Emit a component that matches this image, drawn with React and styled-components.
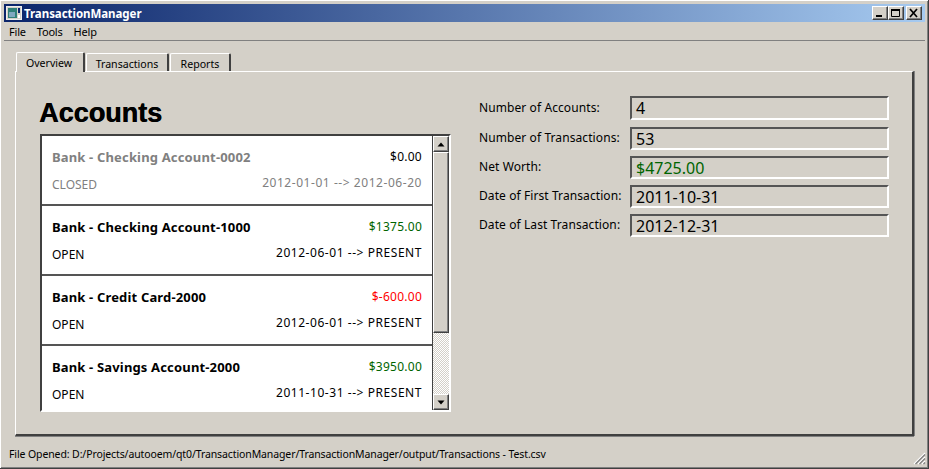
import React from "react";
import styled, { createGlobalStyle } from "styled-components";

const Global = createGlobalStyle`
  html, body { margin: 0; padding: 0; background: #d4d0c8; }
  * { box-sizing: border-box; }
`;
const FONT = `"Noto Sans", "DejaVu Sans", sans-serif`;

const Win = styled.div`
  position: relative;
  width: 929px; height: 469px; overflow: hidden;
  background: #d4d0c8; font-family: ${FONT}; font-size: 11px; color: #000;
  display: flex; flex-direction: column;
  padding: 4px 3px 3px 4px;
  border-right: 1px solid #404040; border-bottom: 1px solid #404040;
  box-shadow: inset 1px 1px 0 #fff, inset -1px -1px 0 #808080;
`;
const TitleBar = styled.div`
  height: 18px; flex: none; display: flex; align-items: center; padding: 0 3px 0 2px;
  background: linear-gradient(90deg, #0a246a, #a6caf0);
  color: #fff; font-weight: 700; font-size: 11.5px;
`;
const AppIcon = styled.svg` width: 16px; height: 14px; margin-right: 2px; flex: none; `;
const TitleText = styled.span` flex: 1; letter-spacing: -0.05px; `;
const WinBtn = styled.div`
  width: 16px; height: 14px; margin-left: ${p => p.$ml || 0}px; background: #d4d0c8;
  border: 1px solid; border-color: #fff #404040 #404040 #fff;
  box-shadow: inset -1px -1px 0 #808080;
  display: flex; align-items: center; justify-content: center;
`;
const MenuBar = styled.div`
  height: 19px; flex: none; display: flex; align-items: center; gap: 11px; padding: 1px 0 0 5px;
  border-bottom: 1px solid #808080; font-size: 11px; letter-spacing: -0.2px;
`;
const Body = styled.div`
  flex: none; padding: 11px 0 0 11px; display: flex; flex-direction: column;
`;
const TabRow = styled.div` display: flex; align-items: flex-end; height: 19px; flex: none; position: relative; z-index: 1; padding-left: 1px; `;
const Tab = styled.div`
  height: ${p => p.$active ? 20 : 18}px;
  width: ${p => p.$w}px; margin-right: 1px;
  display: flex; align-items: center; justify-content: center;
  padding: ${p => p.$active ? "0 2px 0 0" : "3px 0 0 0"};
  background: #d4d0c8; font-size: 10.6px;
  border-top: 1px solid #fff; border-left: 1px solid #fff;
  border-right: 2px solid #404040;
  border-radius: 2px 2px 0 0;
  margin-bottom: ${p => p.$active ? -1 : 0}px;
`;
const Pane = styled.div`
  width: 899px; height: 365px; flex: none;
  border-top: 1px solid #fff; border-left: 1px solid #fff;
  border-right: 2px solid #404040; border-bottom: 2px solid #404040;
  box-shadow: 0 1px 0 #808080, 1px 0 0 #808080;
  padding: 22px 24px 0 24px;
  display: flex;
`;
const LeftCol = styled.div` width: 412px; flex: none; display: flex; flex-direction: column; `;
const Heading = styled.h1`
  margin: 0 0 0 -1px; height: 40px; font-size: 27px; line-height: 38px; font-weight: 700;
  font-family: "Liberation Sans", sans-serif; text-shadow: 0.6px 0 0 #000;
`;
const ListFrame = styled.div`
  width: 411px; height: 278px; display: flex; background: #fff;
  border: 2px solid; border-color: #404040 #fff #fff #404040;
  box-shadow: inset -1px -1px 0 #d4d0c8;
`;
const Items = styled.div` width: 390px; flex: none; overflow: hidden; height: 100%; `;
const Item = styled.div`
  height: 70px; border-bottom: 2px solid #555; background: #fff;
  padding: 0 10px; display: grid; grid-template-columns: 1fr auto; grid-template-rows: 37px 27px;
  color: ${p => p.$muted ? "#808080" : "#000"}; font-size: 12px;
  align-items: center;
`;
const ItemName = styled.div` font-weight: 700; font-size: 13px; padding-top: 5px; letter-spacing: 0.16px; `;
const Amount = styled.div` justify-self: end; padding-top: 3px; letter-spacing: 0.25px; color: ${p => p.$c || "#000"}; `;
const ItemStatus = styled.div` padding-bottom: 5px; `;
const ItemDates = styled.div` justify-self: end; padding-bottom: 8px; letter-spacing: 0.55px; `;
const Scroll = styled.div`
  width: 17px; flex: none; display: flex; flex-direction: column; height: 274px;
  border-left: 1px solid #404040;
  background: repeating-conic-gradient(#fff 0 25%, #d4d0c8 0 50%) 0 0 / 2px 2px;
`;
const ScrollBtn = styled.div`
  width: 16px; height: 16px; flex: none; background: #d4d0c8;
  border: 1px solid; border-color: #fff #404040 #404040 #fff;
  box-shadow: inset -1px -1px 0 #808080;
  display: flex; align-items: center; justify-content: center;
`;
const Thumb = styled.div`
  width: 16px; height: 181px; flex: none; background: #d4d0c8;
  border: 1px solid; border-color: #fff #404040 #404040 #fff;
  box-shadow: inset -1px -1px 0 #808080;
`;
const Spacer = styled.div` flex: 1; `;
const Info = styled.div`
  margin-left: 27px; margin-top: 2px; display: grid; grid-template-columns: 151px 259px;
  align-content: start; row-gap: 6px; align-items: center;
`;
const Label = styled.div` font-size: 12px; white-space: nowrap; letter-spacing: 0.09px; padding-bottom: 2px; `;
const Value = styled.div`
  height: ${p => p.$first ? 24 : 23}px; margin-bottom: ${p => p.$first ? 1 : 0}px;
  border: 2px solid; border-color: #555 #fff #fff #555;
  padding-left: 4px; font-size: 16px; line-height: 21px; color: ${p => p.$c || "#000"};
`;
const Status = styled.div`
  flex: 1; display: flex; align-items: center; padding: 6px 0 0 5px; font-size: 10.5px;
  letter-spacing: -0.11px; white-space: nowrap;
`;
const Grip = styled.svg` position: absolute; right: 2px; bottom: 3px; width: 14px; height: 14px; `;

const rows = [
  { name: "Bank - Checking Account-0002", amt: "$0.00", st: "CLOSED", d: "2012-01-01 --> 2012-06-20", muted: true },
  { name: "Bank - Checking Account-1000", amt: "$1375.00", c: "#006400", st: "OPEN", d: "2012-06-01 --> PRESENT" },
  { name: "Bank - Credit Card-2000", amt: "$-600.00", c: "#ff0000", st: "OPEN", d: "2012-06-01 --> PRESENT" },
  { name: "Bank - Savings Account-2000", amt: "$3950.00", c: "#006400", st: "OPEN", d: "2011-10-31 --> PRESENT" },
];
const info = [
  ["Number of Accounts:", "4"],
  ["Number of Transactions:", "53"],
  ["Net Worth:", "$4725.00", "#006400"],
  ["Date of First Transaction:", "2011-10-31"],
  ["Date of Last Transaction:", "2012-12-31"],
];

export default function App() {
  return (
    <Win>
      <Global />
      <TitleBar>
        <AppIcon viewBox="0 0 16 14">
          <rect x="0.5" y="0.5" width="15" height="13" fill="#d4d0c8" stroke="#eee" />
          <rect x="2" y="2" width="9" height="10" fill="#2f7f78" />
          <rect x="3" y="6" width="6" height="5" fill="#7fa8c0" />
          <rect x="12" y="2" width="2" height="5" fill="#0a246a" />
          <rect x="12" y="9" width="2" height="3" fill="#fff" />
        </AppIcon>
        <TitleText>TransactionManager</TitleText>
        <WinBtn>
          <svg width="14" height="12" viewBox="0 0 14 12"><rect x="3" y="8" width="6" height="2" fill="#000" /></svg>
        </WinBtn>
        <WinBtn>
          <svg width="14" height="12" viewBox="0 0 14 12"><path d="M2.5 2.5h8v7h-8z" fill="none" stroke="#000" /><rect x="2" y="2" width="9" height="2" fill="#000" /></svg>
        </WinBtn>
        <WinBtn $ml={2}>
          <svg width="14" height="12" viewBox="0 0 14 12"><path d="M3 2l7 8M10 2L3 10" stroke="#000" strokeWidth="1.7" fill="none" /></svg>
        </WinBtn>
      </TitleBar>
      <MenuBar><span>File</span><span>Tools</span><span>Help</span></MenuBar>
      <Body>
        <TabRow>
          <Tab $active $w={69}>Overview</Tab>
          <Tab $w={83}>Transactions</Tab>
          <Tab $w={61}>Reports</Tab>
        </TabRow>
        <Pane>
          <LeftCol>
            <Heading>Accounts</Heading>
            <ListFrame>
              <Items>
                {rows.map(r => (
                  <Item key={r.name} $muted={r.muted}>
                    <ItemName>{r.name}</ItemName>
                    <Amount $c={r.c}>{r.amt}</Amount>
                    <ItemStatus>{r.st}</ItemStatus>
                    <ItemDates>{r.d}</ItemDates>
                  </Item>
                ))}
              </Items>
              <Scroll>
                <ScrollBtn><svg width="8" height="5" viewBox="0 0 8 5"><path d="M4 0.5L7.5 4.5H0.5z" fill="#000" /></svg></ScrollBtn>
                <Thumb />
                <Spacer />
                <ScrollBtn><svg width="8" height="5" viewBox="0 0 8 5"><path d="M4 4.5L7.5 0.5H0.5z" fill="#000" /></svg></ScrollBtn>
              </Scroll>
            </ListFrame>
          </LeftCol>
          <Info>
            {info.map(([l, v, c], i) => (
              <React.Fragment key={l}>
                <Label>{l}</Label>
                <Value $c={c} $first={i === 0}>{v}</Value>
              </React.Fragment>
            ))}
          </Info>
        </Pane>
      </Body>
      <Status>File Opened: D:/Projects/autooem/qt0/TransactionManager/TransactionManager/output/Transactions - Test.csv</Status>
      <Grip viewBox="0 0 14 14">
        <path d="M13 2L2 13M13 6L6 13M13 10L10 13" stroke="#fff" strokeWidth="1.2" />
        <path d="M13 3.5L3.5 13M13 7.5L7.5 13M13 11.5L11.5 13" stroke="#808080" strokeWidth="1.2" />
      </Grip>
    </Win>
  );
}
